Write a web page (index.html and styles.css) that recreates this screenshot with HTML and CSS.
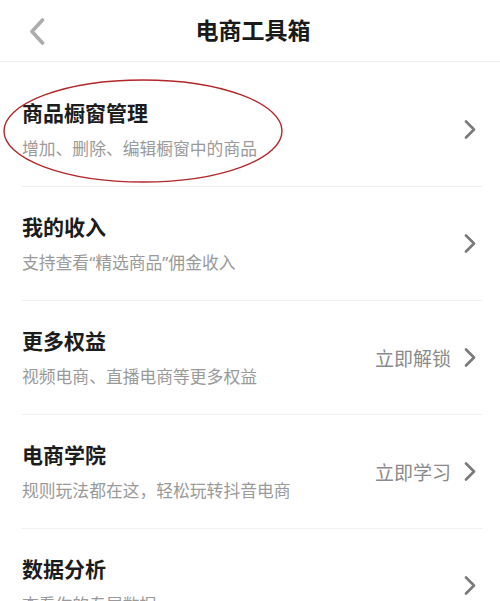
FILE: index.html
```html
<!DOCTYPE html>
<html lang="zh-CN">
<head>
<meta charset="utf-8">
<title>电商工具箱</title>
<link rel="stylesheet" href="styles.css">
</head>
<body>
<div class="page">
  <header class="topbar">
    <span class="back">
      <svg width="16" height="27" viewBox="0 0 16 27"><path d="M13.5 2 L3 13.5 L13.5 25" fill="none" stroke="#acacac" stroke-width="3.6" stroke-linecap="round" stroke-linejoin="round"/></svg>
    </span>
    <h1 class="title">电商工具箱</h1>
  </header>
  <ul class="list">
    <li class="row first">
      <div class="text">
        <div class="name">商品橱窗管理</div>
        <div class="desc">增加、删除、编辑橱窗中的商品</div>
      </div>
      <div class="side">
        <svg class="chev" width="12" height="19" viewBox="0 0 12 19"><path d="M2 1.5 L10 9.5 L2 17.5" fill="none" stroke="#7a7a7a" stroke-width="2.6" stroke-linecap="round" stroke-linejoin="round"/></svg>
      </div>
    </li>
    <li class="row">
      <div class="text">
        <div class="name">我的收入</div>
        <div class="desc">支持查看<span class="q">“</span>精选商品<span class="q">”</span>佣金收入</div>
      </div>
      <div class="side">
        <svg class="chev" width="12" height="19" viewBox="0 0 12 19"><path d="M2 1.5 L10 9.5 L2 17.5" fill="none" stroke="#7a7a7a" stroke-width="2.6" stroke-linecap="round" stroke-linejoin="round"/></svg>
      </div>
    </li>
    <li class="row">
      <div class="text">
        <div class="name">更多权益</div>
        <div class="desc">视频电商、直播电商等更多权益</div>
      </div>
      <div class="side">
        <span class="action">立即解锁</span>
        <svg class="chev" width="12" height="19" viewBox="0 0 12 19"><path d="M2 1.5 L10 9.5 L2 17.5" fill="none" stroke="#7a7a7a" stroke-width="2.6" stroke-linecap="round" stroke-linejoin="round"/></svg>
      </div>
    </li>
    <li class="row">
      <div class="text">
        <div class="name">电商学院</div>
        <div class="desc">规则玩法都在这，轻松玩转抖音电商</div>
      </div>
      <div class="side">
        <span class="action">立即学习</span>
        <svg class="chev" width="12" height="19" viewBox="0 0 12 19"><path d="M2 1.5 L10 9.5 L2 17.5" fill="none" stroke="#7a7a7a" stroke-width="2.6" stroke-linecap="round" stroke-linejoin="round"/></svg>
      </div>
    </li>
    <li class="row">
      <div class="text">
        <div class="name">数据分析</div>
        <div class="desc">查看你的专属数据</div>
      </div>
      <div class="side">
        <svg class="chev" width="12" height="19" viewBox="0 0 12 19"><path d="M2 1.5 L10 9.5 L2 17.5" fill="none" stroke="#7a7a7a" stroke-width="2.6" stroke-linecap="round" stroke-linejoin="round"/></svg>
      </div>
    </li>
  </ul>
  <svg class="mark" width="300" height="110" viewBox="0 0 300 110"><ellipse cx="143" cy="53" rx="139" ry="51" fill="none" stroke="#b3262a" stroke-width="1.4"/></svg>
</div>
</body>
</html>
```

FILE: styles.css
```css
html, body {
  margin: 0;
  padding: 0;
  background: #ffffff;
}
body {
  font-family: "Noto Sans CJK SC", "Noto Sans", sans-serif;
  color: #1c1c1c;
}
.page {
  position: relative;
  width: 500px;
  height: 601px;
  overflow: hidden;
}
.topbar {
  position: relative;
  height: 61px;
  border-bottom: 1px solid #efefef;
  display: flex;
  align-items: center;
  justify-content: center;
}
.back {
  position: absolute;
  left: 29px;
  top: 18px;
  display: block;
  line-height: 0;
}
.title {
  margin: -3px 0 0 6px;
  font-size: 23px;
  font-weight: 700;
  line-height: 30px;
  color: #1a1a1a;
}
.list {
  list-style: none;
  margin: 0;
  padding: 11px 0 0 0;
}
.row {
  margin: 0 18px 0 22px;
  padding: 25px 6px 25px 0;
  border-bottom: 1px solid #efefef;
  display: flex;
  align-items: center;
  justify-content: space-between;
}
.text {
  display: flex;
  flex-direction: column;
  gap: 10px;
}
.name {
  font-size: 21px;
  font-weight: 700;
  line-height: 28px;
  color: #1c1c1c;
}
.desc {
  font-size: 16.8px;
  line-height: 25px;
  color: #9a9a9a;
}
.q {
  font-family: "Noto Sans", "Liberation Sans", sans-serif;
}
.side {
  display: flex;
  align-items: center;
  gap: 13px;
}
.action {
  font-size: 19px;
  line-height: 26px;
  color: #8a8a8a;
}
.chev {
  display: block;
}
.mark {
  position: absolute;
  left: 0;
  top: 78px;
}
```
